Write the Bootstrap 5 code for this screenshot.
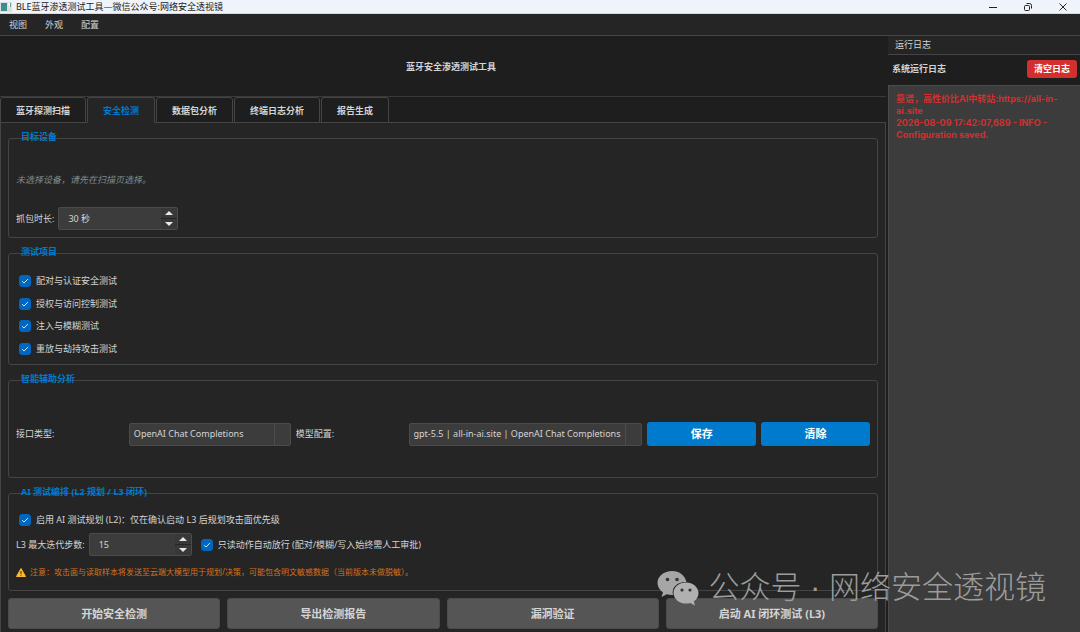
<!DOCTYPE html>
<html lang="zh-CN">
<head>
<meta charset="utf-8">
<meta name="viewport" content="width=device-width, initial-scale=1">
<title>BLE蓝牙渗透测试工具</title>
<link href="https://cdn.jsdelivr.net/npm/bootstrap@5.3.0/dist/css/bootstrap.min.css" rel="stylesheet">
<style>
:root { --line:#454545; --pane:#252525; --deep:#1e1e1e; --field:#3c3c3c; --accent:#007acc; }
body { font-family:"Noto Sans","Noto Sans CJK SC",sans-serif; font-size:9px; line-height:12px; color:#d4d4d4; background:var(--deep); }
h1,h2,h3 { font-size:9px; line-height:12px; font-weight:700; margin:0; }
.title-bar { height:14px; background:#eff3fa; color:#1c1c1c; border-bottom:1px solid #d5d8dc; }
.win-btn { width:35px; height:12px; padding:0; border:0; background:none; line-height:0; color:#222; }
.menu-bar { height:22px; background:var(--pane); border-bottom:1px solid var(--line); padding-left:9px; gap:18px; }
.menu-bar a { color:#d4d4d4; text-decoration:none; }
.page-head { height:61px; border-bottom:1px solid #3a3a3a; padding:2px 0 0 16px; }
.tool-tabs { gap:1px; height:26px; border-bottom:1px solid var(--line); }
.tool-tabs .nav-link { height:26px; padding:0 15px; border:1px solid var(--line); border-radius:3px 3px 0 0; color:#d4d4d4; font-weight:700; line-height:26px; margin:0; background:var(--deep); }
.tool-tabs .nav-link.active { color:var(--accent); background:var(--pane); border-color:var(--line) var(--line) var(--pane); }
.tool-pane { background:var(--pane); border:solid var(--line); border-width:0 1px; padding:15px 7px 3px; gap:15px; }
.group { border:1px solid var(--line); border-radius:3px; padding:0 7px; min-height:98px; }
.group-tall { min-height:112px; }
.group-title { color:var(--accent); height:12px; margin:-8px 0 0 5px; }
.hint { color:#7f8c8d; font-style:italic; margin:31px 0 21px; }
.spin { height:23px; border:1px solid #4b4b4b; border-radius:2px; background:var(--field); }
.spin input { min-width:0; flex:1 1 0; border:0; background:none; color:#d4d4d4; padding:0 9px; outline:0; }
.spin-keys { width:16px; gap:1px; background:var(--pane); }
.spin-keys button { border:0; padding:0; background:#383838; color:#e8e8e8; line-height:0; display:flex; align-items:center; justify-content:center; flex:1 1 0; }
.spin-wide { width:120px; }
.spin-short { width:103px; }
.form-check-input.tick { width:12px; height:12px; margin:0; border-radius:3px; border-color:#0067c0; background-color:#0067c0; float:none; flex:none;
  background-image:url("data:image/svg+xml,%3Csvg xmlns='http://www.w3.org/2000/svg' viewBox='0 0 12 12'%3E%3Cpath d='M2.5 6.2l2.3 2.3 4.7-4.8' fill='none' stroke='%23fff' stroke-width='1'/%3E%3C/svg%3E"); }
.tick-row { gap:5px; padding-left:3px; }
.tests { margin:12px 0 4px; }
.model-grid { display:grid; grid-template-columns:108fr 162fr 108fr 234fr 109fr 109fr; gap:5px; align-items:center; margin-top:6px; }
.plan-row { margin-top:16px; }
.steps-row { gap:4px; margin-top:7px; }
.tick-row.read-only-row { padding-left:5px; }
.form-select.pick { height:23px; min-width:0; padding:0 17px 0 4px; border:1px solid #4b4b4b; border-radius:2px; color:#d4d4d4; font-size:9px; line-height:12px; background:linear-gradient(#4b4b4b,#4b4b4b) right 15px top/1px 100% no-repeat var(--field); }
.act { height:24px; padding:0; border:0; border-radius:3px; background:var(--accent); color:#fff; font-size:11px; line-height:14px; font-weight:700; }
.warn { color:#d3721c; font-size:8px; gap:4px; margin-top:10px; }
.run-row { gap:7px; margin-top:-8px; }
.run { height:31px; flex:1 1 0; padding:0; border:1px solid #4b4b4b; border-radius:3px; background:#555; color:#d4d4d4; font-size:11px; line-height:14px; font-weight:700; }
.dock { flex:0 0 192px; margin-left:2px; }
.dock-title { height:19px; background:var(--pane); border-bottom:1px solid var(--line); padding-left:7px; }
.dock-head { height:30px; padding:0 3px 2px 4px; }
.clear { height:18px; padding:0 7px; border:0; border-radius:3px; background:#d32f2f; color:#fff; font-size:9px; line-height:12px; font-weight:700; }
.log { background:var(--field); border:solid #4b4b4b; border-width:1px 0 0 1px; color:#d32f2f; font-family:Inter,"Noto Sans CJK SC",sans-serif; font-weight:700; padding:7px; }
.watermark { right:34px; bottom:22px; gap:9px; color:#9c9c9c; font-family:"Liberation Sans","Noto Sans CJK SC",sans-serif; font-size:31px; line-height:44px; font-weight:300; pointer-events:none; white-space:nowrap; }
</style>
</head>
<body class="d-flex flex-column min-vh-100 position-relative">
<header>
  <div class="title-bar d-flex align-items-center">
    <svg width="12" height="10" viewBox="0 0 12 10" class="ms-0 me-1" aria-hidden="true"><rect width="12" height="10" fill="#d9dfe2"/><rect x="1" y="1" width="6" height="8" fill="#3d9185"/><rect x="2" y="1" width="4" height="3" fill="#4a7fa5"/><path d="M8 1h3v4H9V3H8z" fill="#fff"/><path d="M10 1h1v4h-1z" fill="#5aa58c"/></svg>
    <span class="flex-grow-1">BLE蓝牙渗透测试工具—微信公众号:网络安全透视镜</span>
    <button class="win-btn" aria-label="最小化"><svg width="10" height="10"><path d="M1 5.5h8" stroke="currentColor"/></svg></button>
    <button class="win-btn" aria-label="还原"><svg width="10" height="10" fill="none" stroke="currentColor"><rect x="1.5" y="3.5" width="5" height="5" rx="1"/><path d="M3.5 1.5h3a2 2 0 0 1 2 2v3"/></svg></button>
    <button class="win-btn" aria-label="关闭"><svg width="10" height="10"><path d="M1.5 1.5l7 7m0-7l-7 7" stroke="currentColor"/></svg></button>
  </div>
  <nav class="menu-bar d-flex align-items-center"><a href="#">视图</a><a href="#">外观</a><a href="#">配置</a></nav>
</header>
<div class="d-flex flex-grow-1">
  <main class="d-flex flex-column flex-grow-1">
    <div class="page-head d-flex align-items-center justify-content-center"><h1>蓝牙安全渗透测试工具</h1></div>
    <nav class="nav tool-tabs">
      <a class="nav-link" href="#">蓝牙探测扫描</a><a class="nav-link active" href="#">安全检测</a><a class="nav-link" href="#">数据包分析</a><a class="nav-link" href="#">终端日志分析</a><a class="nav-link" href="#">报告生成</a>
    </nav>
    <div class="tool-pane d-flex flex-column flex-grow-1">
      <section class="group flex-grow-1">
        <h2 class="group-title">目标设备</h2>
        <p class="hint">未选择设备，请先在扫描页选择。</p>
        <div class="d-flex align-items-center gap-1">
          <label for="dur">抓包时长:</label>
          <div class="spin spin-wide d-flex"><input id="dur" type="text" value="30 秒">
            <div class="spin-keys d-flex flex-column"><button aria-label="增加"><svg width="8" height="4"><path d="M0 4l4-4 4 4z" fill="currentColor"/></svg></button><button aria-label="减少"><svg width="8" height="4"><path d="M0 0l4 4 4-4z" fill="currentColor"/></svg></button></div>
          </div>
        </div>
      </section>
      <section class="group group-tall d-flex flex-column flex-grow-1">
        <h2 class="group-title">测试项目</h2>
        <div class="tests d-flex flex-column flex-grow-1">
          <div class="tick-row d-flex align-items-center flex-fill"><input class="form-check-input tick" type="checkbox" id="t1" checked><label for="t1">配对与认证安全测试</label></div>
          <div class="tick-row d-flex align-items-center flex-fill"><input class="form-check-input tick" type="checkbox" id="t2" checked><label for="t2">授权与访问控制测试</label></div>
          <div class="tick-row d-flex align-items-center flex-fill"><input class="form-check-input tick" type="checkbox" id="t3" checked><label for="t3">注入与模糊测试</label></div>
          <div class="tick-row d-flex align-items-center flex-fill"><input class="form-check-input tick" type="checkbox" id="t4" checked><label for="t4">重放与劫持攻击测试</label></div>
        </div>
      </section>
      <section class="group d-flex flex-column flex-grow-1">
        <h2 class="group-title">智能辅助分析</h2>
        <div class="model-grid flex-grow-1">
          <label for="api">接口类型:</label>
          <select class="form-select pick" id="api"><option>OpenAI Chat Completions</option></select>
          <label for="model">模型配置:</label>
          <select class="form-select pick" id="model"><option>gpt-5.5 | all-in-ai.site | OpenAI Chat Completions</option></select>
          <button class="btn act">保存</button>
          <button class="btn act">清除</button>
        </div>
      </section>
      <section class="group flex-grow-1">
        <h2 class="group-title">AI 测试编排 (L2 规划 / L3 闭环)</h2>
        <div class="tick-row plan-row d-flex align-items-center"><input class="form-check-input tick" type="checkbox" id="l2" checked><label for="l2">启用 AI 测试规划 (L2)：仅在确认启动 L3 后规划攻击面优先级</label></div>
        <div class="steps-row d-flex align-items-center">
          <label for="steps">L3 最大迭代步数:</label>
          <div class="spin spin-short d-flex"><input id="steps" type="text" value="15">
            <div class="spin-keys d-flex flex-column"><button aria-label="增加"><svg width="8" height="4"><path d="M0 4l4-4 4 4z" fill="currentColor"/></svg></button><button aria-label="减少"><svg width="8" height="4"><path d="M0 0l4 4 4-4z" fill="currentColor"/></svg></button></div>
          </div>
          <div class="tick-row read-only-row d-flex align-items-center"><input class="form-check-input tick" type="checkbox" id="ro" checked><label for="ro">只读动作自动放行 (配对/模糊/写入始终需人工审批)</label></div>
        </div>
        <div class="warn d-flex align-items-center"><svg width="10" height="9" viewBox="0 0 10 9" aria-hidden="true"><path d="M5 .5L9.5 8.5H.5z" fill="#ffb733" stroke="#ffb733" stroke-linejoin="round"/><path d="M5 3v3M5 6.8v1" stroke="#333"/></svg><span>注意：攻击面与读取样本将发送至云端大模型用于规划/决策，可能包含明文敏感数据（当前版本未做脱敏）。</span></div>
      </section>
      <div class="run-row d-flex">
        <button class="btn run">开始安全检测</button><button class="btn run">导出检测报告</button><button class="btn run">漏洞验证</button><button class="btn run">启动 AI 闭环测试 (L3)</button>
      </div>
    </div>
  </main>
  <aside class="dock d-flex flex-column">
    <div class="dock-title d-flex align-items-center">运行日志</div>
    <div class="dock-head d-flex align-items-center justify-content-between"><h2>系统运行日志</h2><button class="btn clear">清空日志</button></div>
    <div class="log flex-grow-1">靠谱，高性价比AI中转站:https://all-in-ai.site<br>2026-08-09 17:42:07,689 - INFO - Configuration saved.</div>
  </aside>
</div>
<div class="watermark position-absolute d-flex align-items-center">
  <svg width="42" height="36" viewBox="0 0 42 36" aria-hidden="true"><path fill="#a6a6a6" d="M15 1C7 1 .5 6.300 .5 13c0 4 2.200 7.200 5.500 9.400L4.500 27l5.300-2.800c2 .6 4 .9 6.200.8C14 17 21 11.500 29.500 12 28 5.500 22.500 1 15 1z"/><path fill="#b0b0b0" d="M29 13.500c-7 0-12.500 4.700-12.500 10.400S22 34.500 29 34.500c1.500 0 3-.2 4.300-.6L38 36.500l-1.200-4c2.900-2 4.700-5 4.700-8.400 0-5.900-5.600-10.600-12.500-10.600z" transform="translate(0 -1)"/><g fill="#333"><circle cx="10.500" cy="9.500" r="1.800"/><circle cx="20" cy="9.500" r="1.800"/><circle cx="25" cy="20" r="1.600"/><circle cx="33" cy="20" r="1.600"/></g></svg>
  <span>公众号 · 网络安全透视镜</span>
</div>
<script src="https://cdn.jsdelivr.net/npm/bootstrap@5.3.0/dist/js/bootstrap.bundle.min.js"></script>
</body>
</html>
